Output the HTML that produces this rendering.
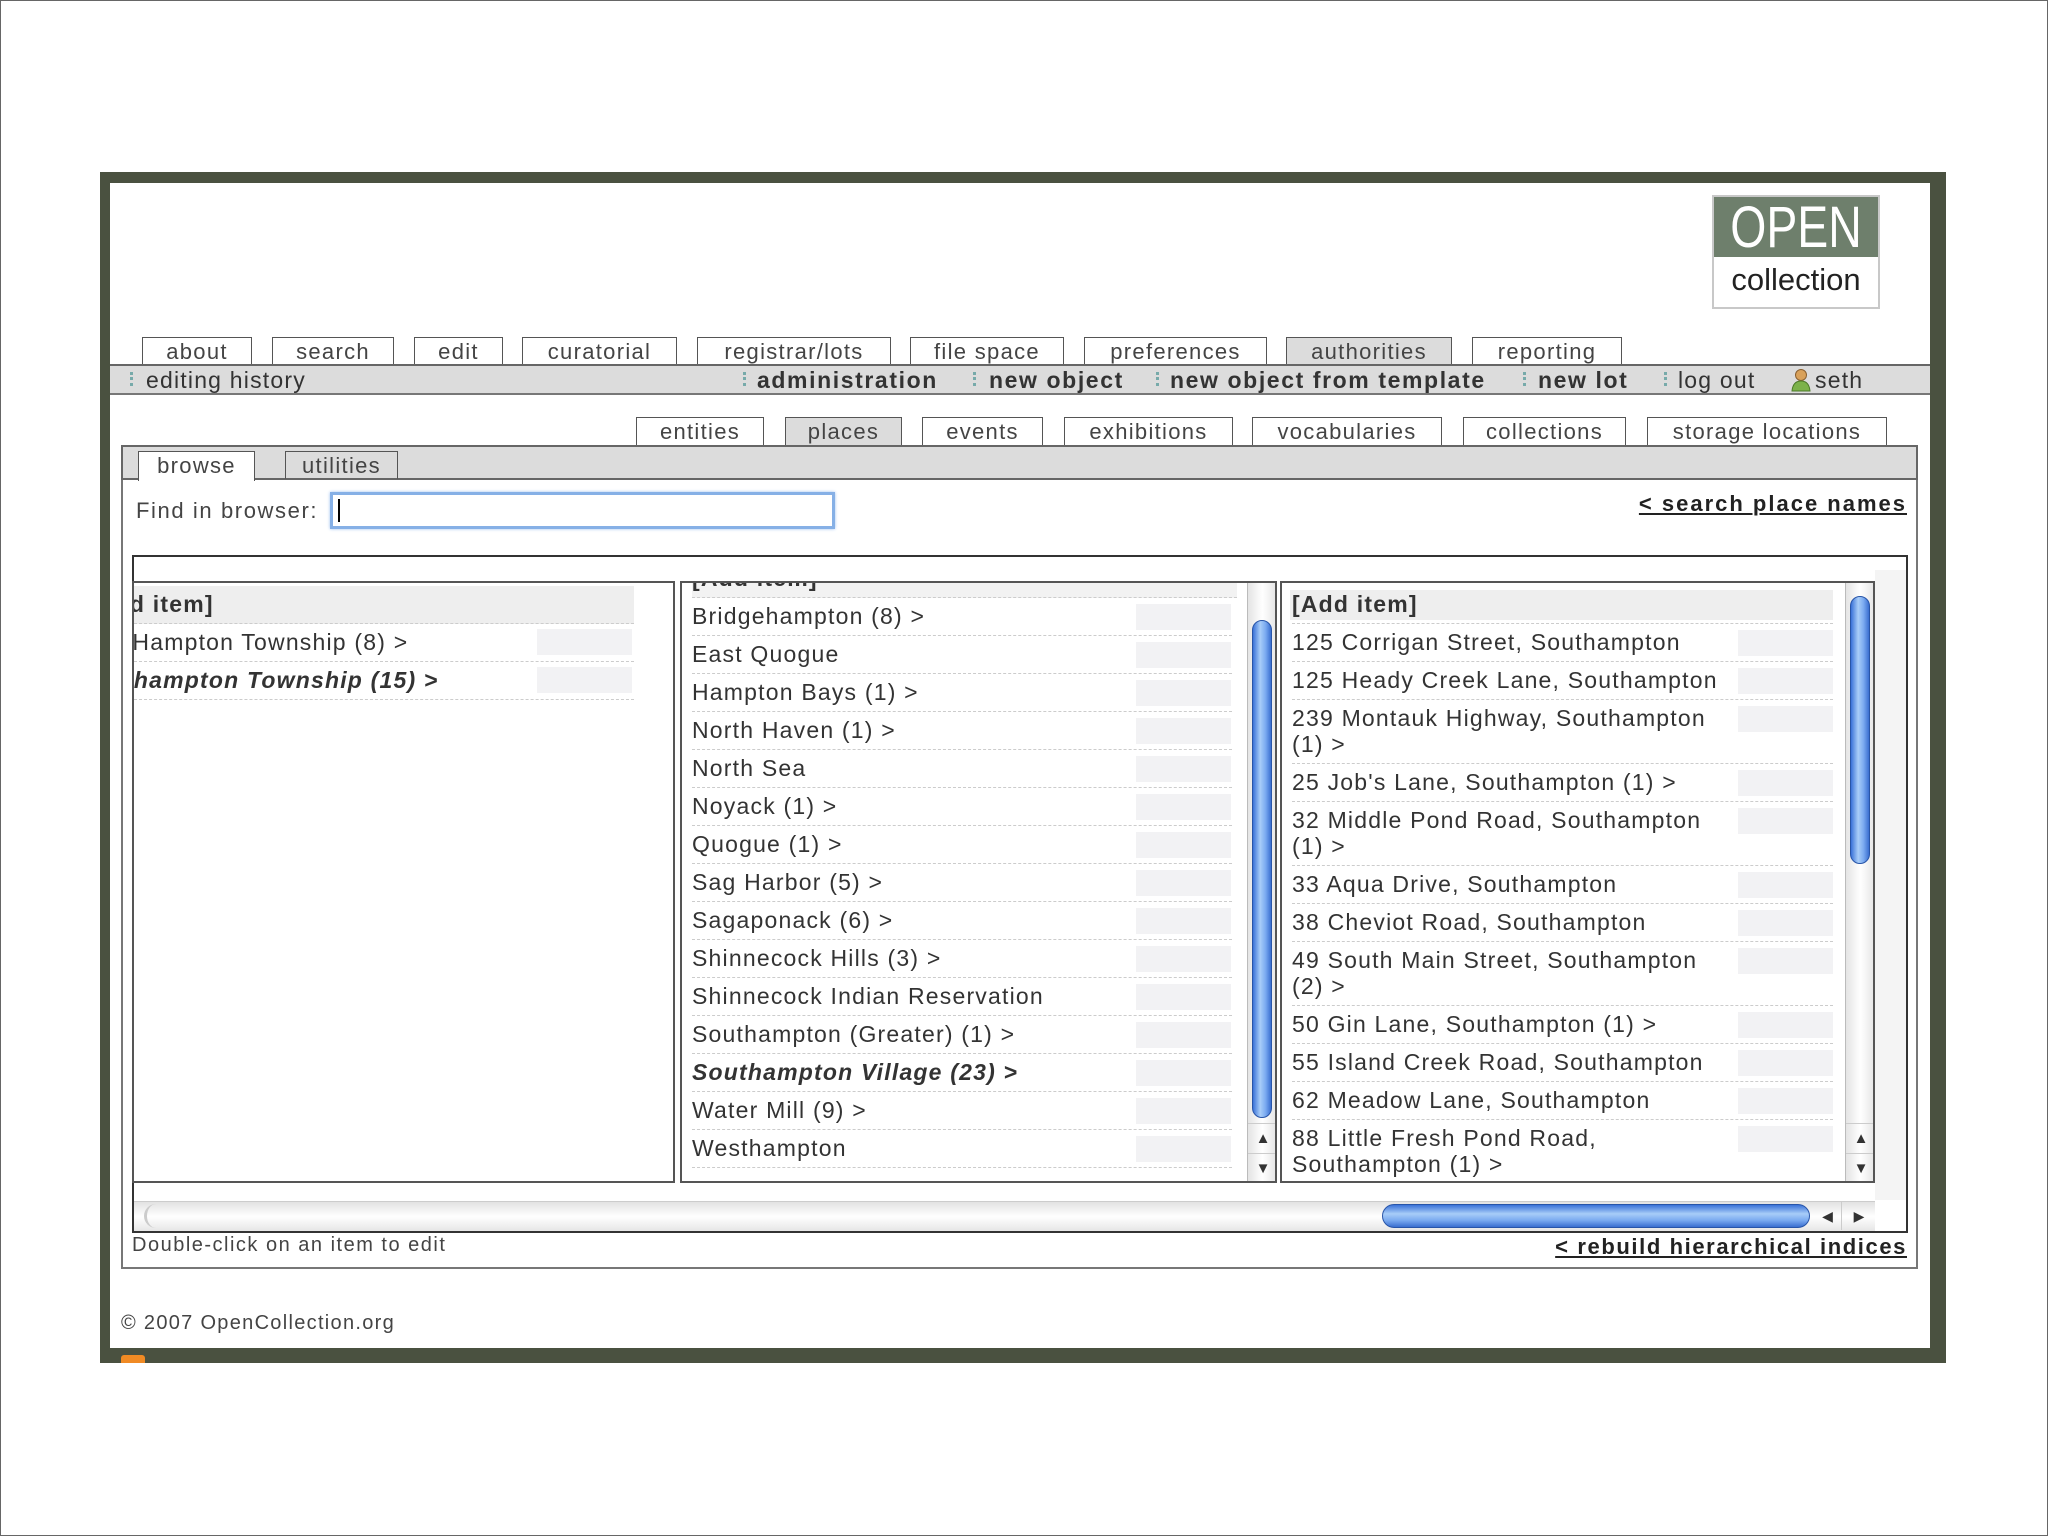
<!DOCTYPE html>
<html><head><meta charset="utf-8">
<style>
*{box-sizing:border-box;margin:0;padding:0}
body{width:2048px;height:1536px;position:relative;background:#fff;font-family:"Liberation Sans",sans-serif;color:#333;overflow:hidden}
.a{position:absolute}
.outer{left:0;top:0;width:2048px;height:1536px;border:1px solid #666}
.frame{left:100px;top:172px;width:1846px;height:1191px;background:#4a5140}
.inner{left:110px;top:183px;width:1820px;height:1165px;background:#fff}
.tab{position:absolute;top:337px;height:28px;border:1.5px solid #555;border-bottom:none;background:#fff;font-size:22px;text-align:center;line-height:28px;color:#444;letter-spacing:1.3px}
.bar{left:110px;top:364px;width:1820px;height:31px;background:#dcdcdc;border-top:2px solid #666;border-bottom:2px solid #777}
.bi{position:absolute;top:1px;font-size:23px;color:#333;white-space:nowrap;letter-spacing:1.2px}
.bi b{color:#333;letter-spacing:1.6px}
.dot{position:absolute;top:6px;width:4px;height:14px;border-left:3px dotted #7aa}
.st{position:absolute;top:417px;height:29px;border:1.5px solid #555;border-bottom:none;background:#fff;font-size:22px;text-align:center;line-height:28px;color:#444;letter-spacing:1.3px}
.col{position:absolute;top:581px;height:602px;border:2px solid #555;overflow:hidden;background:#fff}
.row{position:absolute;height:38px;border-bottom:1.5px dashed #ccc;font-size:23px;line-height:36px;white-space:nowrap;color:#333;letter-spacing:1.2px}
.gb{position:absolute;background:#f2f2f4;height:26px}
.vs{position:absolute;width:30px;background:linear-gradient(90deg,#e4e4e4,#fff 50%,#e4e4e4);border-left:1px solid #bbb}
.thumb{position:absolute;left:4px;width:20px;border-radius:10px;background:linear-gradient(90deg,#3a72d8,#a8cdf8 40%,#7aaaf0 70%,#3a6fd0);border:1px solid #2855a8}
.ar{position:absolute;left:0;width:30px;height:30px;font-size:15px;text-align:center;line-height:30px;color:#333}
</style></head><body>
<div class="a outer"></div>
<div class="a frame"></div>
<div class="a inner"></div>
<div class="a" style="left:121px;top:1355px;width:24px;height:8px;background:#f08a24;border-radius:3px 3px 0 0"></div>

<!-- logo -->
<div class="a" style="left:1712px;top:195px;width:168px;height:114px;border:2px solid #c8c8c8;background:#fff"></div>
<div class="a" style="left:1714px;top:197px;width:164px;height:60px;background:#6e7f6c;overflow:hidden"><div style="color:#fff;font-size:58px;line-height:62px;text-align:center;transform:scaleX(0.8);transform-origin:center;white-space:nowrap;margin-left:-20px;width:204px">OPEN</div></div>
<div class="a" style="left:1714px;top:257px;width:164px;height:50px;color:#222;font-size:31px;line-height:46px;text-align:center">collection</div>

<!-- top tabs -->
<div class="tab" style="left:142px;width:110px">about</div>
<div class="tab" style="left:272px;width:122px">search</div>
<div class="tab" style="left:414px;width:89px">edit</div>
<div class="tab" style="left:522px;width:155px">curatorial</div>
<div class="tab" style="left:697px;width:194px">registrar/lots</div>
<div class="tab" style="left:910px;width:154px">file space</div>
<div class="tab" style="left:1084px;width:183px">preferences</div>
<div class="tab" style="left:1286px;width:166px;background:#dcdcdc;height:30px">authorities</div>
<div class="tab" style="left:1472px;width:150px">reporting</div>

<div class="a bar">
 <span class="dot" style="left:20px"></span><span class="bi" style="left:36px">editing history</span>
 <span class="dot" style="left:633px"></span><span class="bi" style="left:647px"><b>administration</b></span>
 <span class="dot" style="left:863px"></span><span class="bi" style="left:879px"><b>new object</b></span>
 <span class="dot" style="left:1046px"></span><span class="bi" style="left:1060px"><b>new object from template</b></span>
 <span class="dot" style="left:1413px"></span><span class="bi" style="left:1428px"><b>new lot</b></span>
 <span class="dot" style="left:1554px"></span><span class="bi" style="left:1568px">log out</span>
 <svg class="a" style="left:1680px;top:2px" width="22" height="24" viewBox="0 0 22 24"><circle cx="11" cy="7" r="5.5" fill="#d9a15a" stroke="#8a6030"/><path d="M2 23 Q3 13 11 13 Q19 13 20 23Z" fill="#7cb24a" stroke="#4d7a2a"/></svg>
 <span class="bi" style="left:1705px">seth</span>
</div>

<!-- sub tabs -->
<div class="st" style="left:636px;width:128px">entities</div>
<div class="st" style="left:785px;width:117px;background:#dcdcdc;height:30px">places</div>
<div class="st" style="left:922px;width:121px">events</div>
<div class="st" style="left:1064px;width:169px">exhibitions</div>
<div class="st" style="left:1252px;width:190px">vocabularies</div>
<div class="st" style="left:1463px;width:163px">collections</div>
<div class="st" style="left:1647px;width:240px">storage locations</div>

<!-- panel -->
<div class="a" style="left:121px;top:445px;width:1797px;height:824px;border:2px solid #777;background:#fff"></div>
<div class="a" style="left:121px;top:445px;width:1797px;height:35px;background:#dcdcdc;border:2px solid #666"></div>
<div class="a" style="left:138px;top:451px;width:117px;height:30px;background:#fff;border:1.5px solid #555;border-bottom:none;font-size:22px;text-align:center;line-height:28px;color:#444;letter-spacing:1.3px">browse</div>
<div class="a" style="left:285px;top:451px;width:113px;height:28px;border:1.5px solid #555;border-bottom:none;font-size:22px;text-align:center;line-height:28px;color:#444;letter-spacing:1.3px">utilities</div>

<div class="a" style="left:136px;top:498px;font-size:22px;color:#444;letter-spacing:1.6px">Find in browser:</div>
<div class="a" style="left:330px;top:492px;width:505px;height:37px;border:3px solid #86b0e6;box-shadow:0 0 3px #9cc0f0;background:#fff"></div>
<div class="a" style="left:338px;top:499px;width:2px;height:23px;background:#000"></div>
<div class="a" style="right:141px;top:491px;font-size:22px;font-weight:bold;text-decoration:underline;color:#222;letter-spacing:2px">&lt; search place names</div>

<!-- browser -->
<div class="a" style="left:132px;top:555px;width:1776px;height:678px;border:2px solid #333;background:#fff"></div>
<div class="a" style="left:1875px;top:570px;width:31px;height:630px;background:#f4f4f4"></div>

<!-- col1 -->
<div class="col" style="left:132px;width:543px">
 <div class="row" style="left:0;top:3px;width:500px;background:#eee"></div>
 <div class="row" style="left:-46px;top:3px;font-weight:bold;border:none">[Add item]</div>
 <div class="gb" style="left:403px;top:46px;width:95px"></div>
 <div class="row" style="left:0;top:41px;width:500px"></div>
 <div class="row" style="left:-60px;top:41px;border:none">East Hampton Township (8) &gt;</div>
 <div class="gb" style="left:403px;top:84px;width:95px"></div>
 <div class="row" style="left:0;top:79px;width:500px"></div>
 <div class="row" style="left:-56px;top:79px;border:none;font-weight:bold;font-style:italic">Southampton Township (15) &gt;</div>
</div>

<!-- col2 -->
<div class="col" style="left:680px;width:597px">
 <div style="position:absolute;left:10px;top:-23px">
 <div class="row" style="left:0;top:0;width:545px;font-weight:bold;background:#f2f2f2">[Add item]</div>
 </div>
 <div id="c2"></div>
 <div class="vs" style="left:565px;top:0;height:598px">
  <div class="thumb" style="top:37px;height:498px"></div>
  <div class="ar" style="top:540px;border-top:1px solid #ccc">▲</div>
  <div class="ar" style="top:570px;border-top:1px solid #ccc">▼</div>
 </div>
</div>

<!-- col3 -->
<div class="col" style="left:1280px;width:595px">
 <div id="c3"></div>
 <div class="vs" style="left:563px;top:0;height:598px">
  <div class="thumb" style="top:13px;height:268px"></div>
  <div class="ar" style="top:540px;border-top:1px solid #ccc">▲</div>
  <div class="ar" style="top:570px;border-top:1px solid #ccc">▼</div>
 </div>
</div>

<!-- h scroll -->
<div class="a" style="left:134px;top:1201px;width:1741px;height:30px;background:linear-gradient(#e2e2e2,#fff 50%,#e6e6e6);border-top:1px solid #ccc"></div>
<div class="a" style="left:144px;top:1204px;width:20px;height:24px;border-left:3px solid #ccc;border-radius:12px 0 0 12px"></div>
<div class="a" style="left:1382px;top:1204px;width:428px;height:24px;border-radius:12px;background:linear-gradient(#3a72d8,#a8cdf8 40%,#7aaaf0 70%,#3a6fd0);border:1px solid #2855a8"></div>
<div class="a" style="left:1814px;top:1202px;width:28px;height:28px;font-size:14px;line-height:28px;text-align:center;border-right:1px solid #ccc">◀</div>
<div class="a" style="left:1845px;top:1202px;width:28px;height:28px;font-size:14px;line-height:28px;text-align:center">▶</div>

<div class="a" style="left:132px;top:1234px;font-size:20px;color:#444;letter-spacing:1.5px">Double-click on an item to edit</div>
<div class="a" style="right:141px;top:1234px;font-size:22px;font-weight:bold;text-decoration:underline;color:#222;letter-spacing:1.6px">&lt; rebuild hierarchical indices</div>

<div class="a" style="left:121px;top:1312px;font-size:20px;color:#444;letter-spacing:1.3px">© 2007 OpenCollection.org</div>

<script>
var c2=["Bridgehampton (8) &gt;","East Quogue","Hampton Bays (1) &gt;","North Haven (1) &gt;","North Sea","Noyack (1) &gt;","Quogue (1) &gt;","Sag Harbor (5) &gt;","Sagaponack (6) &gt;","Shinnecock Hills (3) &gt;","Shinnecock Indian Reservation","Southampton (Greater) (1) &gt;","<b><i>Southampton Village (23) &gt;</i></b>","Water Mill (9) &gt;","Westhampton"];
var h="";
c2.forEach(function(t,i){var y=15+i*38;h+='<div class="gb" style="left:454px;top:'+(y+6)+'px;width:95px"></div><div class="row" style="left:10px;top:'+y+'px;width:540px">'+t+'</div>';});
document.getElementById("c2").innerHTML=h;
var c3=[["<b>[Add item]</b>",1],["125 Corrigan Street, Southampton",1],["125 Heady Creek Lane, Southampton",1],["239 Montauk Highway, Southampton<br>(1) &gt;",2],["25 Job's Lane, Southampton (1) &gt;",1],["32 Middle Pond Road, Southampton<br>(1) &gt;",2],["33 Aqua Drive, Southampton",1],["38 Cheviot Road, Southampton",1],["49 South Main Street, Southampton<br>(2) &gt;",2],["50 Gin Lane, Southampton (1) &gt;",1],["55 Island Creek Road, Southampton",1],["62 Meadow Lane, Southampton",1],["88 Little Fresh Pond Road,<br>Southampton (1) &gt;",2]];
h="";var y=3;
c3.forEach(function(r,i){var ht=r[1]==1?38:64;
 if(i==0)h+='<div class="gb" style="left:8px;top:'+(y+4)+'px;width:543px;height:30px;background:#eee"></div>';
 else h+='<div class="gb" style="left:456px;top:'+(y+6)+'px;width:95px"></div>';
 h+='<div class="row" style="left:10px;top:'+y+'px;width:541px;height:'+ht+'px;line-height:'+(r[1]==1?36:26)+'px;padding-top:'+(r[1]==1?0:5)+'px">'+r[0]+'</div>';y+=ht;});
document.getElementById("c3").innerHTML=h;
</script>
</body></html>
